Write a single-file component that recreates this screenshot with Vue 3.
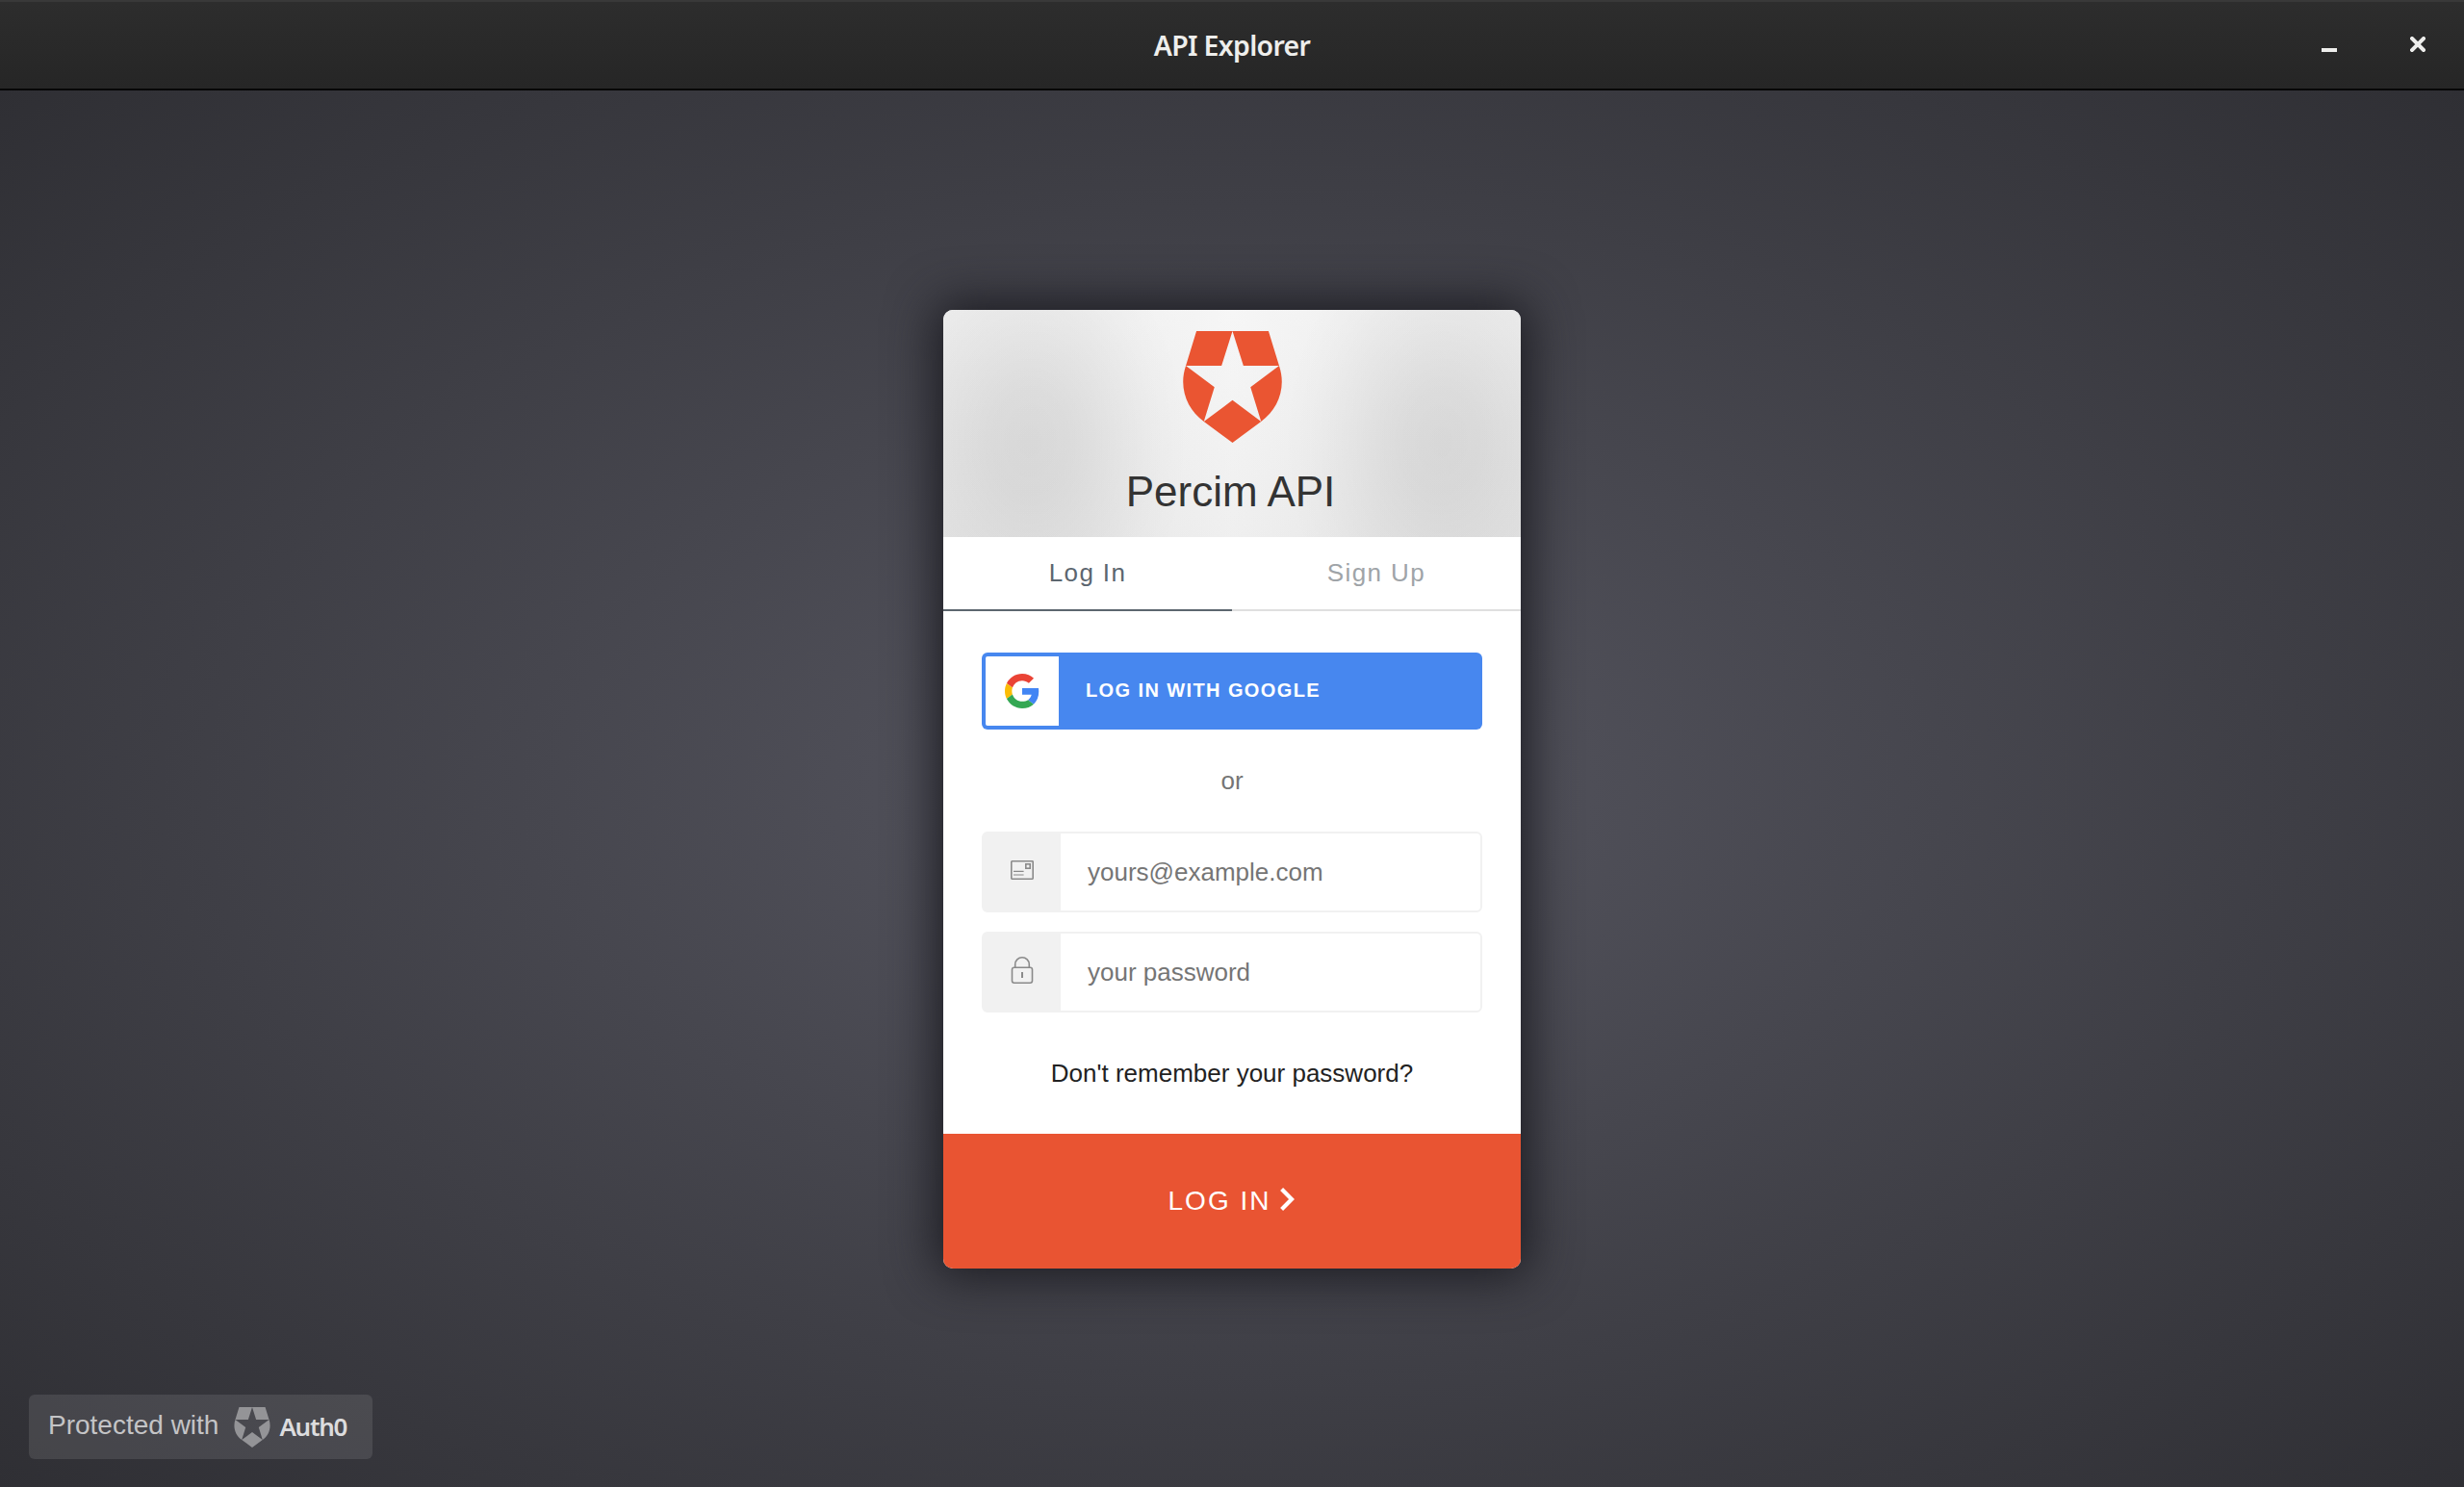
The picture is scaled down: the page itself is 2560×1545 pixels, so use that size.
<script setup>
const tabs = [
  { label: 'Log In', active: true },
  { label: 'Sign Up', active: false },
]
</script>

<template>
  <div class="window">
    <header class="titlebar">
      <h1 class="window-title">API Explorer</h1>
      <div class="controls">
        <svg class="control" width="16" height="16" viewBox="0 0 16 16"><path d="M0 12h16v4H0z" fill="#eeeeec" /></svg>
        <svg class="control" width="16" height="16" viewBox="0 0 16 16">
          <path d="M2 2l12 12M14 2L2 14" stroke="#eeeeec" stroke-width="4" stroke-linecap="square" />
        </svg>
      </div>
    </header>

    <main class="stage">
      <section class="card">
        <div class="card-head">
          <svg class="logo" viewBox="86 42 308 347">
            <path d="M128 42H240L206 150H95Z M352 42H240L274 150H385Z M95 150L184 216L151 323C98 285 72 218 95 150Z M385 150L296 216L329 323C382 285 408 218 385 150Z M240 257L329 323L240 389L151 323Z" />
          </svg>
          <div class="name">Percim API</div>
        </div>

        <nav class="tabs">
          <div v-for="t in tabs" :key="t.label" class="tab" :class="{ active: t.active }">{{ t.label }}</div>
        </nav>

        <div class="body">
          <div class="google">
            <div class="google-icon">
              <svg width="36" height="36" viewBox="0 0 48 48">
                <path fill="#EA4335" d="M24 9.5c3.54 0 6.71 1.22 9.21 3.6l6.85-6.85C35.9 2.38 30.47 0 24 0 14.62 0 6.51 5.38 2.56 13.22l7.98 6.19C12.43 13.72 17.74 9.5 24 9.5z" />
                <path fill="#4285F4" d="M46.98 24.55c0-1.57-.15-3.09-.38-4.55H24v9.02h12.94c-.58 2.96-2.26 5.48-4.78 7.18l7.73 6c4.51-4.18 7.09-10.36 7.09-17.65z" />
                <path fill="#FBBC05" d="M10.53 28.59c-.48-1.45-.76-2.99-.76-4.59s.27-3.14.76-4.59l-7.98-6.19C.92 16.46 0 20.12 0 24c0 3.88.92 7.54 2.56 10.78l7.97-6.19z" />
                <path fill="#34A853" d="M24 48c6.48 0 11.93-2.13 15.89-5.81l-7.73-6c-2.15 1.45-4.92 2.3-8.16 2.3-6.26 0-11.57-4.22-13.47-9.91l-7.98 6.19C6.51 42.62 14.62 48 24 48z" />
              </svg>
            </div>
            <div class="google-text">LOG IN WITH GOOGLE</div>
          </div>

          <div class="or">or</div>

          <div class="field">
            <div class="field-icon">
              <svg width="24" height="20" viewBox="0 0 24 20" fill="none" stroke="#8a8a8a" stroke-width="1.6">
                <rect x=".8" y=".8" width="22.4" height="18.4" rx=".6" />
                <rect x="15.8" y="3.8" width="4.4" height="4.4" />
                <path d="M3 11.4h10.6M3 15h10.6" stroke-width="1.2" />
              </svg>
            </div>
            <div class="field-text">yours@example.com</div>
          </div>

          <div class="field">
            <div class="field-icon">
              <svg width="24" height="28" viewBox="0 0 24 28" fill="none" stroke="#8a8a8a" stroke-width="1.6">
                <rect x="1.5" y="11.2" width="21" height="16" rx="2.2" />
                <path d="M4.7 11V8a7.3 7.2 0 0 1 14.6 0v3" />
                <path d="M12 16v6" stroke-width="2" />
              </svg>
            </div>
            <div class="field-text">your password</div>
          </div>

          <div class="forgot">Don't remember your password?</div>
        </div>

        <div class="submit">
          <span>LOG IN</span>
          <svg class="chevron" width="16" height="24" viewBox="0 0 16 24" fill="none" stroke="#fff" stroke-width="4.2">
            <path d="M1.6 1.6L12 12L1.6 22.4" />
          </svg>
        </div>
      </section>

      <div class="badge">
        <span class="badge-text">Protected with</span>
        <svg class="badge-logo" viewBox="86 42 308 347">
          <path d="M128 42H240L206 150H95Z M352 42H240L274 150H385Z M95 150L184 216L151 323C98 285 72 218 95 150Z M385 150L296 216L329 323C382 285 408 218 385 150Z M240 257L329 323L240 389L151 323Z" />
        </svg>
        <span class="badge-brand">Auth0</span>
      </div>
    </main>
  </div>
</template>

<style>
body {
  margin: 0;
  overflow: hidden;
}
</style>

<style scoped>
.window {
  width: 2560px;
  height: 1545px;
  display: flex;
  flex-direction: column;
  font-family: "Liberation Sans", Arial, sans-serif;
}
.titlebar {
  box-sizing: border-box;
  height: 94px;
  flex: none;
  display: grid;
  grid-template-columns: 1fr auto 1fr;
  border-top: 2px solid #393939;
  border-bottom: 2px solid #070707;
  background: linear-gradient(#2d2d2d, #262626);
}
.window-title {
  grid-column: 2;
  margin: 0;
  font: 600 28.5px/90px "Noto Sans", "Open Sans", sans-serif;
  letter-spacing: -.7px;
  color: #eeeeec;
}
.controls {
  display: flex;
  justify-content: flex-end;
  gap: 76px;
  padding: 36px 40px 0 0;
}
.control {
  display: block;
}
.stage {
  position: relative;
  flex: 1;
  display: flex;
  flex-direction: column;
  align-items: center;
  background: radial-gradient(#565660, #2f2f34);
}
.card {
  width: 600px;
  height: 996px;
  margin-top: 228px;
  border-radius: 10px;
  overflow: hidden;
  background: #fff;
  box-shadow: 0 0 50px 8px #1c1c22;
  display: flex;
  flex-direction: column;
}
.card-head {
  height: 236px;
  display: flex;
  flex-direction: column;
  align-items: center;
  background:
    radial-gradient(ellipse 165px 230px at 90px 138px, rgba(0, 0, 0, .08), rgba(0, 0, 0, .066) 25%, rgba(0, 0, 0, .035) 55%, rgba(0, 0, 0, .01) 80%, transparent),
    radial-gradient(ellipse 165px 230px at 518px 138px, rgba(0, 0, 0, .08), rgba(0, 0, 0, .066) 25%, rgba(0, 0, 0, .035) 55%, rgba(0, 0, 0, .01) 80%, transparent),
    linear-gradient(rgba(255, 255, 255, .25), rgba(0, 0, 0, .015)),
    linear-gradient(90deg, #e9e9e9, #ebebeb 25%, #f3f3f3 50%, #ebebeb 75%, #e8e8e8);
}
.logo {
  width: 103px;
  height: 116px;
  margin-top: 22px;
  fill: #ea5532;
}
.name {
  margin-top: 25px;
  padding-right: 3px;
  font-size: 44px;
  line-height: 52px;
  color: #333;
}
.tabs {
  display: flex;
  height: 77px;
}
.tab {
  box-sizing: border-box;
  flex: 1;
  border-bottom: 2px solid #dfdfdf;
  text-align: center;
  font-size: 26px;
  line-height: 74px;
  letter-spacing: 1.4px;
  color: #9fa4a8;
}
.tab.active {
  color: #5c666f;
  border-color: #5c666f;
}
.body {
  flex: 1;
  padding: 43px 40px 0;
}
.google {
  box-sizing: border-box;
  height: 80px;
  padding: 4px;
  border-radius: 6px;
  display: flex;
  background: #4787ef;
}
.google-icon {
  width: 76px;
  display: flex;
  align-items: center;
  justify-content: center;
  border-radius: 2px 0 0 2px;
  background: #fff;
}
.google-text {
  margin-left: 28px;
  font-size: 20px;
  font-weight: 700;
  letter-spacing: 1.4px;
  line-height: 70px;
  color: #fff;
}
.or {
  margin: 38px 0;
  text-align: center;
  font-size: 26px;
  line-height: 30px;
  color: #757575;
}
.field {
  box-sizing: border-box;
  height: 84px;
  margin-bottom: 20px;
  border: 2px solid #f1f1f1;
  border-radius: 6px;
  display: flex;
}
.field-icon {
  width: 80px;
  padding-bottom: 4px;
  box-sizing: border-box;
  display: flex;
  align-items: center;
  justify-content: center;
  background: #f1f1f1;
}
.field-text {
  margin-left: 28px;
  font-size: 26px;
  line-height: 80px;
  color: #757575;
}
.forgot {
  margin-top: 48px;
  text-align: center;
  font-size: 26px;
  line-height: 30px;
  color: #222;
}
.submit {
  height: 140px;
  display: flex;
  align-items: center;
  justify-content: center;
  gap: 10px;
  background: #e95432;
  color: #fff;
  font-size: 28px;
  letter-spacing: 2px;
}
.chevron {
  margin-bottom: 4px;
}
.badge {
  position: absolute;
  left: 30px;
  top: 1355px;
  box-sizing: border-box;
  width: 357px;
  height: 67px;
  padding-left: 20px;
  border-radius: 6px;
  display: flex;
  align-items: center;
  background: rgba(255, 255, 255, .1);
}
.badge-text {
  margin-bottom: 4px;
  font-size: 28px;
  line-height: 32px;
  color: #c4c4c6;
}
.badge-logo {
  width: 38px;
  height: 42px;
  margin-left: 16px;
  fill: #949497;
}
.badge-brand {
  margin: 0 0 2px 9px;
  font: 600 26px/32px "Noto Sans", "Open Sans", sans-serif;
  letter-spacing: -1.3px;
  color: #dcdcde;
}
</style>
